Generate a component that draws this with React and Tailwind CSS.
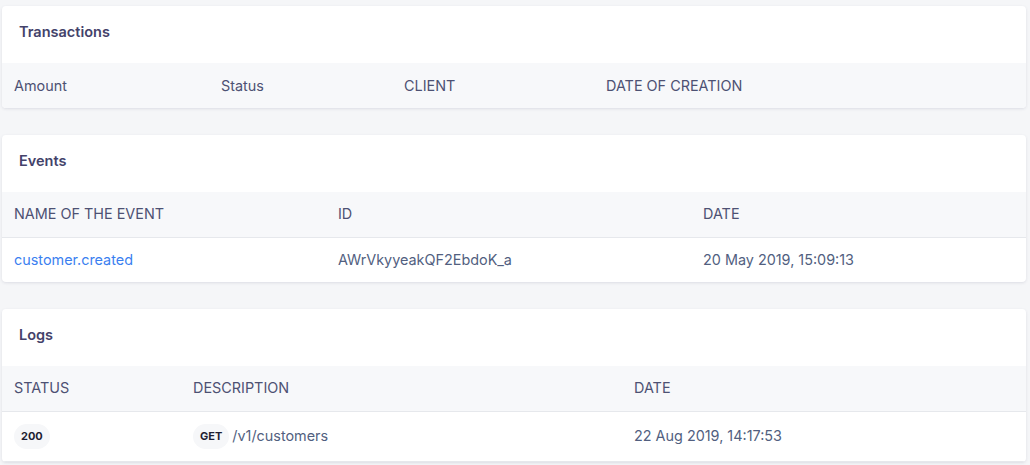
import React from "react";

const font = { fontFamily: "Inter, 'Noto Sans', sans-serif" };

function Card({ title, cols, children }) {
  return (
    <div className="overflow-hidden rounded-[4px] bg-white shadow-[0_1px_3px_rgba(50,50,93,0.12)]">
      <div className="flex h-[57px] items-center px-[17px] pb-[6px] text-[14.5px] font-semibold text-[#43426a]">{title}</div>
      <table className="w-full table-fixed text-left text-[14.4px] text-[#525f7f]">
        <colgroup>
          {cols.map((c) => (
            <col key={c.label} style={{ width: c.w }} />
          ))}
        </colgroup>
        <thead className="bg-[#f7f8fa]">
          <tr className="h-[45px]">
            {cols.map((c) => (
              <th key={c.label} className="px-[12px] font-normal text-[#4d5173]">{c.label}</th>
            ))}
          </tr>
        </thead>
        {children}
      </table>
    </div>
  );
}

function Badge({ children }) {
  return (
    <span className="inline-flex h-[25px] items-center rounded-full bg-[#f6f7f9] px-[7px] text-[11px] font-bold text-[#1f1f33]">
      {children}
    </span>
  );
}

export default function App() {
  return (
    <div className="min-h-[465px] bg-[#f5f6f8] pb-2 pl-[2px] pr-[4px] pt-[6px]" style={font}>
      <div className="flex flex-col gap-[27px]">
        <Card
          title="Transactions"
          cols={[
            { label: "Amount", w: 207 },
            { label: "Status", w: 183 },
            { label: "CLIENT", w: 202 },
            { label: "DATE OF CREATION", w: "auto" },
          ]}
        />

        <Card
          title="Events"
          cols={[
            { label: "NAME OF THE EVENT", w: 324 },
            { label: "ID", w: 365 },
            { label: "DATE", w: "auto" },
          ]}
        >
          <tbody>
            <tr className="h-[45px] border-t border-[#e6e8ec]">
              <td className="px-[12px] text-[#3b7ff0]">customer.created</td>
              <td className="px-[12px]">AWrVkyyeakQF2EbdoK_a</td>
              <td className="px-[12px]">20 May 2019, 15:09:13</td>
            </tr>
          </tbody>
        </Card>

        <Card
          title="Logs"
          cols={[
            { label: "STATUS", w: 179 },
            { label: "DESCRIPTION", w: 441 },
            { label: "DATE", w: "auto" },
          ]}
        >
          <tbody>
            <tr className="h-[50px] border-y border-[#e6e8ec]">
              <td className="px-[12px]">
                <Badge>200</Badge>
              </td>
              <td className="px-[12px]">
                <span className="flex items-center gap-[3px]">
                  <Badge>GET</Badge>
                  <span>/v1/customers</span>
                </span>
              </td>
              <td className="px-[12px]">22 Aug 2019, 14:17:53</td>
            </tr>
          </tbody>
        </Card>
      </div>
    </div>
  );
}
